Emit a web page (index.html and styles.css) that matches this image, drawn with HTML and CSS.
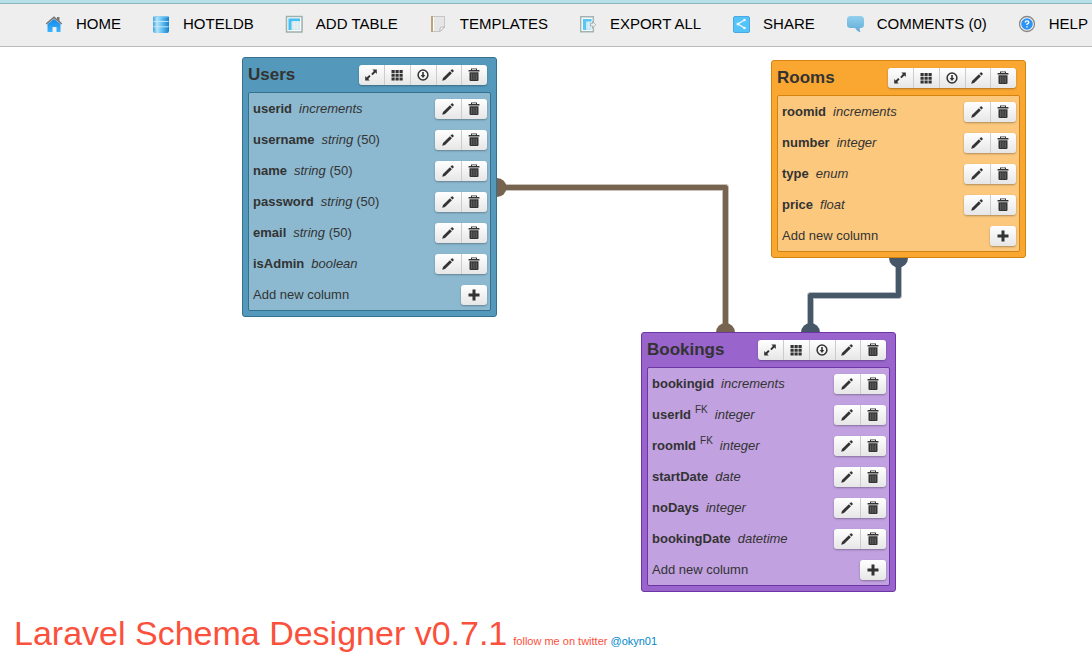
FILE: index.html
```html
<!DOCTYPE html>
<html lang="en">
<head>
<meta charset="utf-8">
<title>Laravel Schema Designer</title>
<link rel="stylesheet" href="styles.css">
</head>
<body>
<svg class="sprite" aria-hidden="true">
  <symbol id="pencil" viewBox="0 0 14 14"><path d="M1.200 12.800l.8-2.900 6.900-6.700 2 2L4 12z M9.500 2.600l1.200-1.200q.5-.4 1 0l.9 1q.5.500 0 1l-1.200 1.200z"/></symbol>
  <symbol id="trash" viewBox="0 0 14 14"><path fill-rule="evenodd" d="M4 2V.500h6V2h2q.5 0 .5.500v1h-11v-1q0-.5.500-.5z M5 1.300V2h4v-.7z"/><path d="M2.500 4.200h9V12q0 1-1 1h-7q-1 0-1-1z"/><path d="M4.500 5.500v6.500M6.200 5.500v6.500M7.900 5.500v6.500M9.600 5.500v6.500" stroke="#888" stroke-width=".5"/></symbol>
  <symbol id="plus" viewBox="0 0 14 14"><path d="M5.500 1.500h3v4h4v3h-4v4h-3v-4h-4v-3h4z"/></symbol>
  <symbol id="resize" viewBox="0 0 14 14"><path d="M8.300 1.500h4.500V6l-1.400-1.400-2.900 2.700-1.300-1.300 2.700-2.900z M5.700 12.500H1.200V8l1.400 1.400 2.700-2.500 1.300 1.300-2.400 2.700z"/></symbol>
  <symbol id="grid" viewBox="0 0 14 14"><path d="M1.500 2H4.700v3H1.500zM5.500 2H8.700v3H5.500zM9.500 2H12.700v3H9.500zM1.500 5.700H4.700v3H1.500zM5.500 5.700H8.700v3H5.500zM9.500 5.700H12.700v3H9.500zM1.500 9.400H4.700v3H1.500zM5.500 9.400H8.700v3H5.500zM9.500 9.400H12.700v3H9.500z"/></symbol>
  <symbol id="down" viewBox="0 0 14 14"><circle cx="7" cy="7" r="4.900" fill="none" stroke="#333" stroke-width="1.500"/><path d="M6.200 4h1.600v3h1.500L7 10 4.700 7h1.500z"/></symbol>
</svg>

<nav class="navbar">
  <a class="nav-item" href="#home"><svg class="nav-icon" viewBox="0 0 16 16"><defs><linearGradient id="blue" x2="0" y2="1"><stop stop-color="#1687e8"/><stop offset="1" stop-color="#39b5ff"/></linearGradient></defs><path d="M11 1h2.500v4.500l-2.500-2z" fill="#777"/><path d="M1.500 8L8 3l6.500 5v7.500q0 .5-.5.500h-3.500v-5H6.500v5H2q-.5 0-.5-.5z" fill="url(#blue)"/><path d="M.7 7.500L8 1.300l7.300 6.200" fill="none" stroke="#777" stroke-width="1.600" stroke-linecap="round"/></svg><span>HOME</span></a>
  <a class="nav-item" href="#db"><svg class="nav-icon" viewBox="0 0 16 16"><defs><linearGradient id="disk"><stop stop-color="#3fa3e2"/><stop offset=".25" stop-color="#b6e5fa"/><stop offset=".6" stop-color="#5cbcec"/><stop offset="1" stop-color="#1680d0"/></linearGradient></defs><path d="M0 1.500Q0 0 2 0h12q2 0 2 1.500V4.500q0 1-1 1 1 .2 1 1v3q0 1-1 1 1 .2 1 1V15q0 2-2 2H2q-2 0-2-2v-3.500q0-.8 1-1-1 0-1-1v-3q0-.8 1-1-1 0-1-1z" fill="url(#disk)"/><path d="M1 .8h14" stroke="#8fd0f3"/><path d="M1 5.500h14M1 10.800h14" fill="none" stroke="#c9ecfb" stroke-width=".9"/></svg><span>HOTELDB</span></a>
  <a class="nav-item" href="#add"><svg class="nav-icon" viewBox="0 0 16 16"><path d="M.5.5h15.500v15.500H.5z" fill="#f7fbfb" stroke="#9db0b0" stroke-width="1.500"/><path d="M2.500 2.500h11.500v11.500H2.500z" fill="#d5e6ec"/><path d="M2.500 2.500h11.500v2.500H5.500v9h-3z" fill="#45c0f6"/><path d="M5.500 8h8.500M5.500 11h8.500M8.300 5v9M11.200 5v9" stroke="#f7fbfb" stroke-width=".6"/></svg><span>ADD TABLE</span></a>
  <a class="nav-item" href="#templates"><svg class="nav-icon" viewBox="0 0 16 16"><path d="M1.500.5h13v10.500l-4.500 4.500H1.500z" fill="#e6e6e6" stroke="#c3c5c6"/><path d="M1 0h2v16H1z" fill="#c0a277"/><path d="M3.500 1v14" stroke="#fff"/><path d="M10 15.500V13q0-2 2-2h2.500z" fill="#fff" stroke="#b7b7b7"/></svg><span>TEMPLATES</span></a>
  <a class="nav-item" href="#export"><svg class="nav-icon" viewBox="0 0 16 16"><path d="M.7.7h12.600v15H.7z" fill="#f7fbfb" stroke="#a3b3b4" stroke-width="1.400"/><path d="M3 3h8.500v11H3z" fill="#bfe6f5"/><path d="M3 3h8.500v2.500H6V14H3z" fill="#56c6f5"/><path d="M6 8h5.500M6 11h5.500M8.700 5v9" stroke="#e8f6fb" stroke-width=".6"/><path d="M10.500 7.500h2V5.500l3.300 3.300-3.300 3.200v-2h-2z" fill="#eee" stroke="#9aa" stroke-width=".8"/></svg><span>EXPORT ALL</span></a>
  <a class="nav-item" href="#share"><svg class="nav-icon" viewBox="0 0 16 16"><rect x=".5" y=".5" width="16" height="16" rx="1.500" fill="#53c3fa" stroke="#4aa9e0"/><path d="M11.500 4L5 8l6.500 4" fill="none" stroke="#eaf7ff" stroke-width="1.400"/><g fill="#eaf7ff"><circle cx="11.500" cy="4" r="1.300"/><circle cx="5" cy="8" r="1.500"/><circle cx="11.500" cy="12" r="1.300"/></g></svg><span>SHARE</span></a>
  <a class="nav-item" href="#comments"><svg class="nav-icon" viewBox="0 0 16 16"><defs><linearGradient id="bubble" x2="0" y2="1"><stop stop-color="#93d0ee"/><stop offset="1" stop-color="#5faad6"/></linearGradient></defs><path d="M3.500 0h10Q17 0 17 3.500v5q0 3.500-3.500 3.500h-.8q-.2 2.500.8 4.200-4-1.200-5.500-4.200H3.500Q0 12 0 8.500v-5Q0 0 3.500 0z" fill="url(#bubble)"/></svg><span>COMMENTS (0)</span></a>
  <a class="nav-item" href="#help"><svg class="nav-icon" viewBox="0 0 16 16"><circle cx="8" cy="8" r="7.500" fill="#f4f4f4" stroke="#888" stroke-width="1.300"/><circle cx="8" cy="8" r="5.800" fill="#2c93f5"/><path d="M6.200 6.500Q6.200 4.900 8 4.900t1.800 1.500Q9.800 7.300 8 8.200v.9M8 10.200v1.400" fill="none" stroke="#fff" stroke-width="1.400"/></svg><span>HELP</span></a>
</nav>

<main class="canvas">
  <svg class="links" aria-hidden="true">
    <g class="link-users"><path class="halo" d="M497 140.500H725.500V285"/><path d="M497 140.500H725.500V285"/><circle cx="497" cy="140.500" r="9.500"/><circle cx="725.500" cy="285.500" r="9.500"/></g>
    <g class="link-rooms"><path class="halo" d="M898.500 211V248.500H810.500V285"/><path d="M898.500 211V248.500H810.500V285"/><circle cx="898.500" cy="211" r="9.500"/><circle cx="810.500" cy="285.500" r="9.500"/></g>
  </svg>

  <section class="entity users">
    <header class="entity-head"><h2>Users</h2><div class="tools">
      <button aria-label="Resize"><svg><use href="#resize"/></svg></button><button aria-label="Grid"><svg><use href="#grid"/></svg></button><button aria-label="Download"><svg><use href="#down"/></svg></button><button aria-label="Edit"><svg><use href="#pencil"/></svg></button><button aria-label="Delete"><svg><use href="#trash"/></svg></button></div></header>
    <ul class="columns">
      <li><span><b>userid</b><i>increments</i></span><div class="tools"><button aria-label="Edit"><svg><use href="#pencil"/></svg></button><button aria-label="Delete"><svg><use href="#trash"/></svg></button></div></li>
      <li><span><b>username</b><i>string</i> (50)</span><div class="tools"><button aria-label="Edit"><svg><use href="#pencil"/></svg></button><button aria-label="Delete"><svg><use href="#trash"/></svg></button></div></li>
      <li><span><b>name</b><i>string</i> (50)</span><div class="tools"><button aria-label="Edit"><svg><use href="#pencil"/></svg></button><button aria-label="Delete"><svg><use href="#trash"/></svg></button></div></li>
      <li><span><b>password</b><i>string</i> (50)</span><div class="tools"><button aria-label="Edit"><svg><use href="#pencil"/></svg></button><button aria-label="Delete"><svg><use href="#trash"/></svg></button></div></li>
      <li><span><b>email</b><i>string</i> (50)</span><div class="tools"><button aria-label="Edit"><svg><use href="#pencil"/></svg></button><button aria-label="Delete"><svg><use href="#trash"/></svg></button></div></li>
      <li><span><b>isAdmin</b><i>boolean</i></span><div class="tools"><button aria-label="Edit"><svg><use href="#pencil"/></svg></button><button aria-label="Delete"><svg><use href="#trash"/></svg></button></div></li>
      <li><span>Add new column</span><div class="tools"><button aria-label="Add column"><svg><use href="#plus"/></svg></button></div></li>
    </ul>
  </section>

  <section class="entity rooms">
    <header class="entity-head"><h2>Rooms</h2><div class="tools">
      <button aria-label="Resize"><svg><use href="#resize"/></svg></button><button aria-label="Grid"><svg><use href="#grid"/></svg></button><button aria-label="Download"><svg><use href="#down"/></svg></button><button aria-label="Edit"><svg><use href="#pencil"/></svg></button><button aria-label="Delete"><svg><use href="#trash"/></svg></button></div></header>
    <ul class="columns">
      <li><span><b>roomid</b><i>increments</i></span><div class="tools"><button aria-label="Edit"><svg><use href="#pencil"/></svg></button><button aria-label="Delete"><svg><use href="#trash"/></svg></button></div></li>
      <li><span><b>number</b><i>integer</i></span><div class="tools"><button aria-label="Edit"><svg><use href="#pencil"/></svg></button><button aria-label="Delete"><svg><use href="#trash"/></svg></button></div></li>
      <li><span><b>type</b><i>enum</i></span><div class="tools"><button aria-label="Edit"><svg><use href="#pencil"/></svg></button><button aria-label="Delete"><svg><use href="#trash"/></svg></button></div></li>
      <li><span><b>price</b><i>float</i></span><div class="tools"><button aria-label="Edit"><svg><use href="#pencil"/></svg></button><button aria-label="Delete"><svg><use href="#trash"/></svg></button></div></li>
      <li><span>Add new column</span><div class="tools"><button aria-label="Add column"><svg><use href="#plus"/></svg></button></div></li>
    </ul>
  </section>

  <section class="entity bookings">
    <header class="entity-head"><h2>Bookings</h2><div class="tools">
      <button aria-label="Resize"><svg><use href="#resize"/></svg></button><button aria-label="Grid"><svg><use href="#grid"/></svg></button><button aria-label="Download"><svg><use href="#down"/></svg></button><button aria-label="Edit"><svg><use href="#pencil"/></svg></button><button aria-label="Delete"><svg><use href="#trash"/></svg></button></div></header>
    <ul class="columns">
      <li><span><b>bookingid</b><i>increments</i></span><div class="tools"><button aria-label="Edit"><svg><use href="#pencil"/></svg></button><button aria-label="Delete"><svg><use href="#trash"/></svg></button></div></li>
      <li><span><b class="key">userId</b><sup>FK</sup><i>integer</i></span><div class="tools"><button aria-label="Edit"><svg><use href="#pencil"/></svg></button><button aria-label="Delete"><svg><use href="#trash"/></svg></button></div></li>
      <li><span><b class="key">roomId</b><sup>FK</sup><i>integer</i></span><div class="tools"><button aria-label="Edit"><svg><use href="#pencil"/></svg></button><button aria-label="Delete"><svg><use href="#trash"/></svg></button></div></li>
      <li><span><b>startDate</b><i>date</i></span><div class="tools"><button aria-label="Edit"><svg><use href="#pencil"/></svg></button><button aria-label="Delete"><svg><use href="#trash"/></svg></button></div></li>
      <li><span><b>noDays</b><i>integer</i></span><div class="tools"><button aria-label="Edit"><svg><use href="#pencil"/></svg></button><button aria-label="Delete"><svg><use href="#trash"/></svg></button></div></li>
      <li><span><b>bookingDate</b><i>datetime</i></span><div class="tools"><button aria-label="Edit"><svg><use href="#pencil"/></svg></button><button aria-label="Delete"><svg><use href="#trash"/></svg></button></div></li>
      <li><span>Add new column</span><div class="tools"><button aria-label="Add column"><svg><use href="#plus"/></svg></button></div></li>
    </ul>
  </section>
</main>

<footer class="brand">
  <h1>Laravel Schema Designer v0.7.1</h1>
  <p>follow me on twitter <a href="#okyn01">@okyn01</a></p>
</footer>
</body>
</html>
```

FILE: styles.css
```css
* {
  box-sizing: border-box;
}

body {
  display: flex;
  flex-direction: column;
  min-height: 100vh;
  margin: 0;
  background: #fff;
  color: #333;
  font: 13px/20px "Liberation Sans", Arial, sans-serif;
}

.sprite {
  position: absolute;
  width: 0;
  height: 0;
}

.navbar {
  display: flex;
  height: 47px;
  padding: 0 0 2px 30px;
  overflow: hidden;
  background: #eee;
  border-top: 3px solid #b7e0e8;
  border-bottom: 1px solid #bbb;
  box-shadow: inset 0 1px #8db5bc;
}

.nav-item {
  display: flex;
  align-items: center;
  gap: 14px;
  padding: 0 16px;
  color: #000;
  font-size: 15px;
  text-decoration: none;
  white-space: nowrap;
}

.nav-icon {
  flex: none;
  width: 16px;
  height: 16px;
  overflow: visible;
}

.canvas {
  position: relative;
  flex: 1;
  min-height: 550px;
}

.links {
  position: absolute;
  inset: 0;
  width: 100%;
  height: 100%;
}

.links path {
  fill: none;
  stroke: currentColor;
  stroke-width: 5px;
  stroke-linejoin: round;
}

.links .halo {
  stroke-width: 7px;
  opacity: 0.4;
}

.links circle {
  fill: currentColor;
}

.link-users {
  color: #776450;
}

.link-rooms {
  color: #465768;
}

.entity {
  position: absolute;
  width: 255px;
  padding: 0 5px 5px;
  background: var(--frame);
  border: 1px solid var(--line);
  border-radius: 3px;
}

.users {
  --frame: #5499bb;
  --panel: #8cb9d0;
  --line: #35708e;
  left: 242px;
  top: 10px;
}

.rooms {
  --frame: #faa732;
  --panel: #fbc87e;
  --line: #d18411;
  left: 771px;
  top: 13px;
}

.bookings {
  --frame: #9965cc;
  --panel: #c1a1e0;
  --line: #6d36a4;
  left: 641px;
  top: 285px;
}

.entity-head {
  display: flex;
  justify-content: space-between;
  align-items: center;
  height: 34px;
  padding-right: 4px;
}

.entity-head h2 {
  margin: 0;
  font-size: 17px;
  line-height: 20px;
}

.entity-head .tools {
  width: 128px;
}

.columns {
  margin: 0;
  padding: 0;
  list-style: none;
  background: var(--panel);
  border: 1px solid var(--line);
  border-radius: 2px;
}

.columns li {
  display: flex;
  justify-content: space-between;
  align-items: center;
  height: 31px;
  padding: 0 3px 0 4px;
}

.columns b {
  margin-right: 7px;
}

.columns .key {
  margin-right: 4px;
}

.columns sup {
  margin-right: 7px;
  font-size: 10px;
  line-height: 0;
}

.tools {
  display: flex;
  height: 20px;
  border-radius: 3px;
  background: linear-gradient(#fff, #e6e6e6);
  box-shadow: 0 1px 2px rgba(0, 0, 0, 0.3);
}

.tools button {
  display: flex;
  flex: 1 0 auto;
  justify-content: center;
  align-items: center;
  min-width: 25px;
  padding: 0 1px 0 0;
  background: none;
  border: 0;
}

.columns button {
  min-width: 26px;
}

.tools button + button {
  border-left: 1px solid #ccc;
}

.tools svg {
  width: 14px;
  height: 14px;
  fill: #333;
}

.brand {
  display: flex;
  align-items: baseline;
  gap: 6px;
  padding: 16px 14px 14px;
  color: #fb503b;
}

.brand h1 {
  margin: 0;
  font-size: 34px;
  font-weight: normal;
  line-height: 40px;
}

.brand p {
  margin: 0;
  font-size: 11px;
}

.brand a {
  color: #0088cc;
  text-decoration: none;
}
```
